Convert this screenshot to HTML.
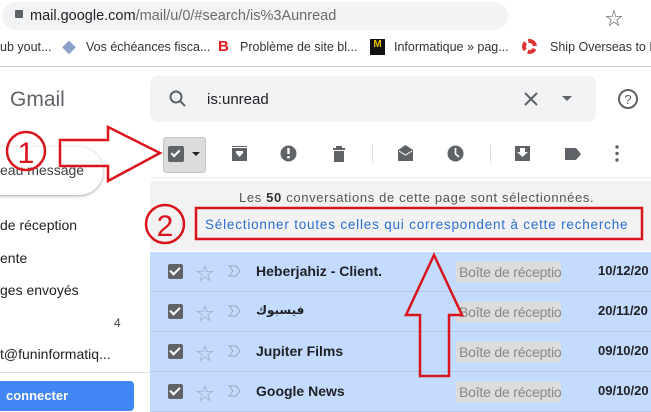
<!DOCTYPE html>
<html><head><meta charset="utf-8"><style>
*{margin:0;padding:0;box-sizing:border-box}
body{width:651px;height:401px;overflow:hidden;background:#fff;font-family:"Liberation Sans","Noto Sans CJK SC",sans-serif;position:relative;color:#202124}
.a{position:absolute;white-space:nowrap}
.row{position:absolute;left:150px;width:501px;height:40px;background:#c2dbff;border-bottom:1px solid #b4cbec}
.cb{position:absolute;left:18px;top:12px;width:15px;height:15px;background:#5f6368;border-radius:2px}
.cb:after{content:"";position:absolute;left:4px;top:1px;width:4px;height:8px;border:solid #fff;border-width:0 2px 2px 0;transform:rotate(45deg)}
.st{position:absolute;left:46px;top:8px;color:#9aa6b8;font-size:18px}
.im{position:absolute;left:78px;top:12px}
.snd{position:absolute;left:106px;top:11px;font-weight:bold;font-size:14px;color:#202124}
.lb{position:absolute;left:306px;top:10px;width:105px;height:20px;background:#dcdcdc;color:#888;font-size:14px;padding:2px 3px;overflow:hidden;white-space:nowrap;letter-spacing:-0.2px}
.dt{position:absolute;left:448px;top:11px;font-weight:bold;font-size:13px}
</style></head><body>
<div class="a" style="left:2px;top:2px;width:506px;height:28px;background:#f1f3f4;border-radius:14px"></div>
<div class="a" style="left:15px;top:10px;width:8px;height:8px;background:#5f6368;border-radius:1px"></div>
<div class="a" style="left:30px;top:8px;font-size:14.5px;color:#202124">mail.google.com<span style="color:#6b6b6b">/mail/u/0/#search/is%3Aunread</span></div>
<div class="a" style="left:605px;top:5px;font-size:18px;color:#5f6368">☆</div>
<div class="a" style="left:0;top:40px;font-size:12.5px;color:#333">ub yout...</div>
<div class="a" style="left:62px;top:38px;font-size:14px;color:#8aa0c8">◆</div>
<div class="a" style="left:86px;top:40px;font-size:12.5px;color:#333">Vos échéances fisca...</div>
<div class="a" style="left:218px;top:38px;font-size:15px;color:#e01b1b;font-weight:bold">B</div>
<div class="a" style="left:240px;top:40px;font-size:12.5px;color:#333">Problème de site bl...</div>
<div class="a" style="left:370px;top:39px;width:15px;height:16px;background:#111;color:#e8c000;font-size:10px;font-weight:bold;text-align:center">M</div>
<div class="a" style="left:394px;top:40px;font-size:12.5px;color:#333">Informatique » pag...</div>
<div class="a" style="left:522px;top:39px;width:15px;height:15px;border-radius:50%;border:4px dashed #d33;background:#fff"></div>
<div class="a" style="left:550px;top:40px;font-size:12.5px;color:#333">Ship Overseas to M</div>
<div class="a" style="left:0;top:66px;width:651px;height:1px;background:#ccc"></div>
<div class="a" style="left:10px;top:88px;font-size:21px;color:#5f6368">Gmail</div>
<div class="a" style="left:150px;top:76px;width:446px;height:46px;background:#f1f3f4;border-radius:8px"></div>
<svg class="a" style="left:168px;top:89px" width="20" height="20"><circle cx="8" cy="8" r="5.5" fill="none" stroke="#5f6368" stroke-width="2"/><line x1="12" y1="12" x2="17" y2="17" stroke="#5f6368" stroke-width="2"/></svg>
<div class="a" style="left:207px;top:91px;font-size:15px;color:#202124">is:unread</div>
<svg class="a" style="left:523px;top:91px" width="16" height="16"><path d="M2 2L14 14M14 2L2 14" stroke="#5f6368" stroke-width="2"/></svg>
<svg class="a" style="left:562px;top:96px" width="10" height="6"><path d="M0 0H10L5 5Z" fill="#5f6368"/></svg>
<svg class="a" style="left:617px;top:88px" width="22" height="22"><circle cx="11" cy="11" r="9" fill="none" stroke="#5f6368" stroke-width="2"/><text x="11" y="16" font-size="13" text-anchor="middle" fill="#5f6368" font-family="Liberation Sans">?</text></svg>
<div class="a" style="left:-40px;top:147px;width:143px;height:48px;border-radius:24px;box-shadow:0 1px 3px rgba(0,0,0,.35);background:#fff"></div>
<div class="a" style="left:0;top:162px;font-size:14px;color:#3c4043">eau message</div>
<div class="a" style="left:0;top:217px;font-size:14px;color:#202124">de réception</div>
<div class="a" style="left:0;top:250px;font-size:14px;color:#202124">ente</div>
<div class="a" style="left:0;top:282px;font-size:14px;color:#202124">ges envoyés</div>
<div class="a" style="left:114px;top:316px;font-size:12px;color:#444">4</div>
<div class="a" style="left:0;top:346px;font-size:14px;color:#202124">t@funinformatiq...</div>
<div class="a" style="left:0;top:372px;width:150px;height:1px;background:#e0e0e0"></div>
<div class="a" style="left:-10px;top:381px;width:144px;height:30px;background:#4285f4;border-radius:4px"></div>
<div class="a" style="left:6px;top:388px;font-size:13px;color:#fff;font-weight:bold">connecter</div>
<!-- toolbar -->
<div class="a" style="left:163px;top:137px;width:43px;height:36px;background:#dcdcdc;border:1px solid #c6c6c6;border-radius:3px"></div>
<div class="a" style="left:168px;top:146px;width:16px;height:16px;background:#5f6368;border-radius:2px"></div>
<div class="a" style="left:173px;top:148px;width:5px;height:9px;border:solid #fff;border-width:0 2px 2px 0;transform:rotate(45deg)"></div>
<svg class="a" style="left:192px;top:152px" width="8" height="5"><path d="M0 0H8L4 4Z" fill="#202124"/></svg>
<svg class="a" style="left:0;top:0" width="651" height="200">
<g fill="#5f6368">
<path d="M232 146H247V161H232Z"/><path d="M236 151H243V153L239.5 157L236 153Z" fill="#fff"/>
<path d="M232 147.5H247" stroke="#fff" stroke-width="1"/>
<circle cx="288.5" cy="153.5" r="8"/><rect x="287.3" y="148" width="2.4" height="6" fill="#fff"/><rect x="287.3" y="156" width="2.4" height="2.4" fill="#fff"/>
<path d="M333 148H345V150H333ZM334 151H344V162H334ZM336 146H342V148H336Z"/>
<path d="M398 150L405.5 145L413 150V161H398Z"/><path d="M399 151L405.5 155L412 151" stroke="#fff" stroke-width="1" fill="none"/>
<circle cx="455.5" cy="153.5" r="8"/><path d="M455.5 148V154L459 157" stroke="#fff" stroke-width="1.6" fill="none"/>
<path d="M515 146H530V161H515Z"/><path d="M520 148H525V152H528L522.5 157L517 152H520Z" fill="#fff"/>
<path d="M565 148H576L581 154L576 160H565Z"/>
<circle cx="617" cy="147" r="1.7"/><circle cx="617" cy="153.5" r="1.7"/><circle cx="617" cy="160" r="1.7"/>
</g></svg>
<div class="a" style="left:372px;top:145px;width:1px;height:18px;background:#ddd"></div>
<div class="a" style="left:490px;top:145px;width:1px;height:18px;background:#ddd"></div>
<div class="a" style="left:150px;top:177px;width:501px;height:1px;background:#eee"></div>
<div class="a" style="left:150px;top:181px;width:501px;height:70px;background:#f2f2f2"></div>
<div class="a" style="left:239px;top:190px;font-size:13px;color:#555;letter-spacing:0.65px">Les <b style="color:#333">50</b> conversations de cette page sont sélectionnées.</div>
<div class="a" style="left:205px;top:217px;font-size:13.5px;color:#2a6fd2;letter-spacing:0.8px">Sélectionner toutes celles qui correspondent à cette recherche</div>
<div class="row" style="top:252px"><div class="cb"></div><div class="st">☆</div><svg class="im" width="14" height="14"><path d="M1 2H8L12 7L8 12H1L5 7Z" fill="none" stroke="#9aa6b8"/></svg><div class="snd">Heberjahiz - Client.</div><div class="lb">Boîte de réception</div><div class="dt">10/12/20</div></div>
<div class="row" style="top:292px"><div class="cb"></div><div class="st">☆</div><svg class="im" width="14" height="14"><path d="M1 2H8L12 7L8 12H1L5 7Z" fill="none" stroke="#9aa6b8"/></svg><div class="snd" style="font-size:12px;font-family:'DejaVu Sans',sans-serif">فيسبوك</div><div class="lb">Boîte de réception</div><div class="dt">20/11/20</div></div>
<div class="row" style="top:332px"><div class="cb"></div><div class="st">☆</div><svg class="im" width="14" height="14"><path d="M1 2H8L12 7L8 12H1L5 7Z" fill="none" stroke="#9aa6b8"/></svg><div class="snd">Jupiter Films</div><div class="lb">Boîte de réception</div><div class="dt">09/10/20</div></div>
<div class="row" style="top:372px"><div class="cb"></div><div class="st">☆</div><svg class="im" width="14" height="14"><path d="M1 2H8L12 7L8 12H1L5 7Z" fill="none" stroke="#9aa6b8"/></svg><div class="snd">Google News</div><div class="lb">Boîte de réception</div><div class="dt">09/10/20</div></div>
<svg class="a" style="left:0;top:0" width="651" height="401">
<g fill="none" stroke="#d9141c" stroke-width="2.5">
<ellipse cx="26" cy="151" rx="19" ry="19"/>
<path d="M60 140H108V127L160 153L108 181V166H60Z"/>
<ellipse cx="165" cy="224" rx="19" ry="19"/>
<rect x="196" y="208" width="446" height="31"/>
<path d="M434 255L462 315H449V376H420V315H406Z"/>
</g>
<text x="26" y="163" font-size="30" text-anchor="middle" fill="#d9141c" font-family="Liberation Sans">1</text>
<text x="165" y="236" font-size="30" text-anchor="middle" fill="#d9141c" font-family="Liberation Sans">2</text>
</svg>
</body></html>
